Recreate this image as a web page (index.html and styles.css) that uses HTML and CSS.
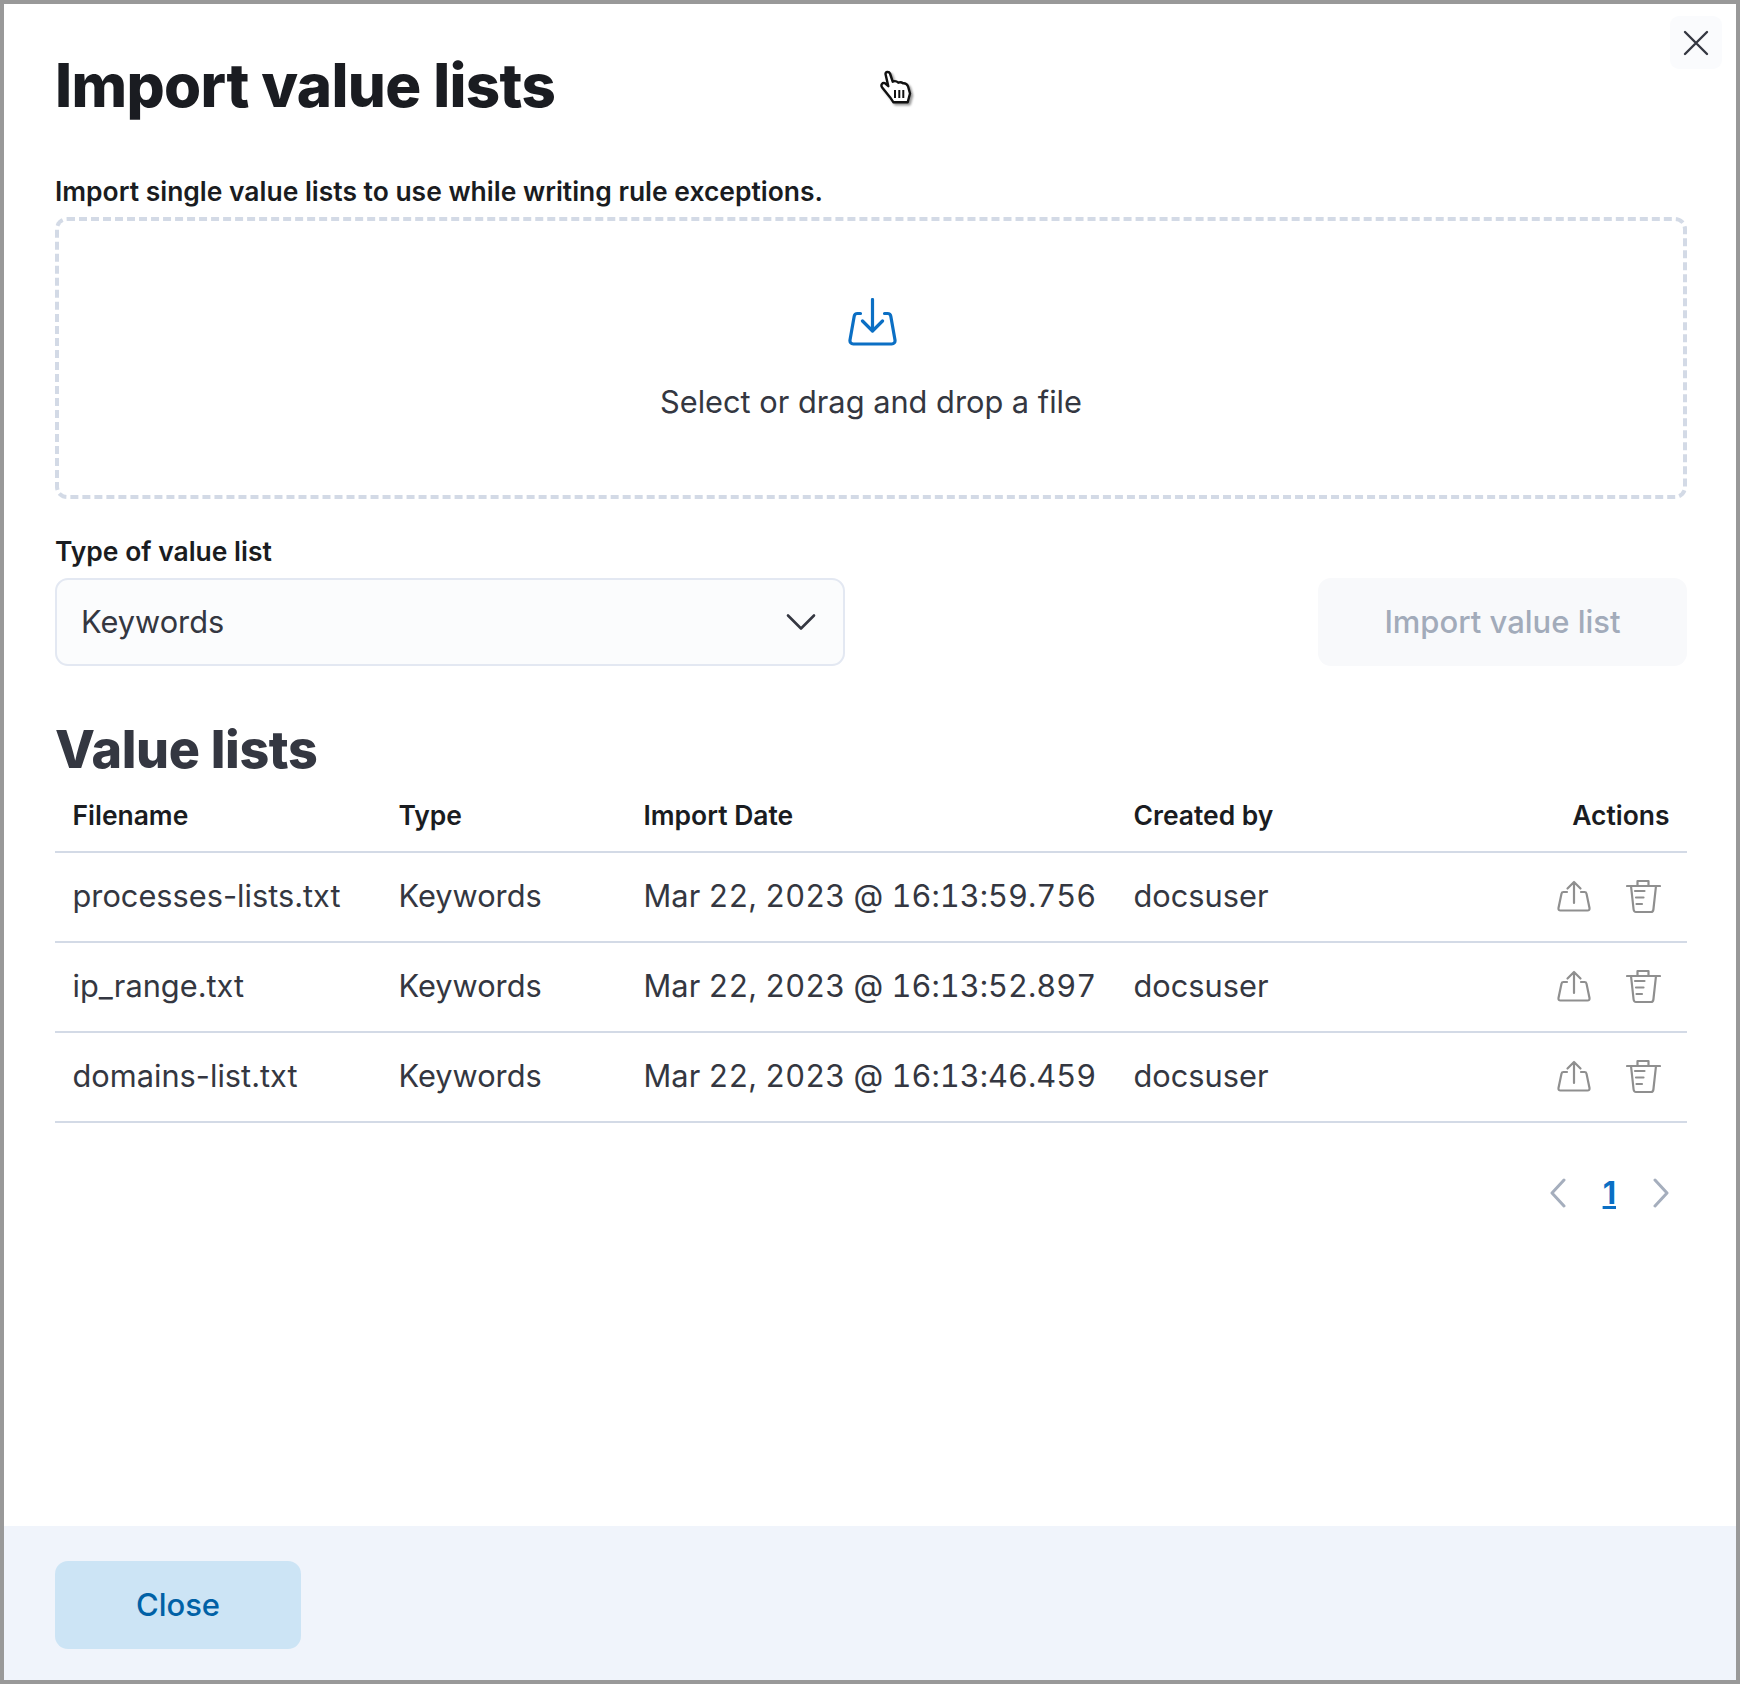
FILE: index.html
```html
<!DOCTYPE html>
<html lang="en">
<head>
<meta charset="UTF-8">
<title>Import value lists</title>
<link rel="stylesheet" href="styles.css">
</head>
<body>
<svg class="iconDefs" width="0" height="0">
    <symbol id="iconShare" viewBox="0 0 34 34">
        <path d="M17 24V3M10.500 9.500L17 3l6.500 6.500M10 13H6.500c-1 0-1.800.6-2 1.600L1.500 29c-.3 1.500.5 2.500 2 2.500h27c1.500 0 2.300-1 2-2.500l-3-14.400c-.2-1-1-1.600-2-1.600H24" fill="none" stroke="#8f8f8f" stroke-width="2.200" stroke-linecap="round" stroke-linejoin="round"/>
    </symbol>
    <symbol id="iconTrash" viewBox="0 0 35 35">
        <path d="M1 7h33M11.500 7V2h11v5M5 7l2.600 23.500c.2 1.600 1 2.500 2.400 2.500h15c1.400 0 2.200-.9 2.400-2.500L30 7M9 12h9.500M10 18.500h7.500M10.500 25h5.500" fill="none" stroke="#8f8f8f" stroke-width="2.200" stroke-linecap="round" stroke-linejoin="round"/>
    </symbol>
</svg>
<div class="modal">
    <button class="closeX" aria-label="Close">
        <svg width="26" height="26" viewBox="0 0 26 26"><path d="M2 2 L24 24 M24 2 L2 24" fill="none" stroke="#343741" stroke-width="2.400" stroke-linecap="round"/></svg>
    </button>

    <svg class="cursor" width="33" height="36" viewBox="0 0 33 36">
        <path d="M6.500 5c0-2.500 3.500-2.800 4.500-.5l2.700 8.200c1.500-.8 4-.5 5.600 1 1.500-.6 3.400-.4 4.700.6 2-.3 4 1 5 3l2 7.200-2.300 8.700H14.300l-3.300-5-8-10c-1.500-2.500 .5-5 2.800-4l3.500 3z" fill="#fff" stroke="#111" stroke-width="2.400" stroke-linejoin="round"/>
        <path d="M16 21v8M20.300 21v8M24.300 21v8" stroke="#111" stroke-width="2" fill="none"/>
    </svg>

    <div class="modalBody">
        <h1>Import value lists</h1>
        <label class="fieldLabel descLabel">Import single value lists to use while writing rule exceptions.</label>
        <div class="dropzone">
            <svg class="dropIcon" width="50" height="50" viewBox="0 0 50 50">
                <path d="M24.500 1.500V32M14.500 23l10 10 10-10M12.500 15.500H9.500c-1.700 0-3 1-3.300 2.700L2 42c-.3 2.300 1 4 3.300 4H43.700c2.300 0 3.600-1.700 3.300-4L42.800 18.200c-.3-1.700-1.600-2.700-3.300-2.700H36.500" fill="none" stroke="#0b6fc4" stroke-width="3.200" stroke-linecap="round" stroke-linejoin="round"/>
            </svg>
            <div class="dropText">Select or drag and drop a file</div>
        </div>

        <label class="fieldLabel typeLabel">Type of value list</label>
        <div class="formRow">
            <div class="selectBox">
                <span>Keywords</span>
                <svg class="selectArrow" width="30" height="18" viewBox="0 0 30 18"><path d="M2 2.500L15 15.500 28 2.500" fill="none" stroke="#343741" stroke-width="2.600" stroke-linecap="round" stroke-linejoin="round"/></svg>
            </div>
            <button class="importBtn" disabled>Import value list</button>
        </div>

        <h2>Value lists</h2>
        <table class="listTable">
            <thead>
                <tr>
                    <th class="colName">Filename</th>
                    <th class="colType">Type</th>
                    <th class="colDate">Import Date</th>
                    <th class="colUser">Created by</th>
                    <th class="colActions">Actions</th>
                </tr>
            </thead>
            <tbody>
                <tr>
                    <td>processes-lists.txt</td>
                    <td>Keywords</td>
                    <td class="dateCell">Mar 22, 2023 @ 16:13:59.756</td>
                    <td>docsuser</td>
                    <td class="colActions">
                        <div class="actionIcons">
                            <svg class="shareIcon"><use href="#iconShare"/></svg>
                            <svg class="trashIcon"><use href="#iconTrash"/></svg>
                        </div>
                    </td>
                </tr>
                <tr>
                    <td>ip_range.txt</td>
                    <td>Keywords</td>
                    <td class="dateCell">Mar 22, 2023 @ 16:13:52.897</td>
                    <td>docsuser</td>
                    <td class="colActions">
                        <div class="actionIcons">
                            <svg class="shareIcon"><use href="#iconShare"/></svg>
                            <svg class="trashIcon"><use href="#iconTrash"/></svg>
                        </div>
                    </td>
                </tr>
                <tr>
                    <td>domains-list.txt</td>
                    <td>Keywords</td>
                    <td class="dateCell">Mar 22, 2023 @ 16:13:46.459</td>
                    <td>docsuser</td>
                    <td class="colActions">
                        <div class="actionIcons">
                            <svg class="shareIcon"><use href="#iconShare"/></svg>
                            <svg class="trashIcon"><use href="#iconTrash"/></svg>
                        </div>
                    </td>
                </tr>
            </tbody>
        </table>

        <div class="pager">
            <svg width="16" height="30" viewBox="0 0 16 30"><path d="M14 2L2 15l12 13" fill="none" stroke="#a5aebd" stroke-width="3" stroke-linecap="round" stroke-linejoin="round"/></svg>
            <span class="pageNum">1</span>
            <svg width="16" height="30" viewBox="0 0 16 30"><path d="M2 2l12 13L2 28" fill="none" stroke="#a5aebd" stroke-width="3" stroke-linecap="round" stroke-linejoin="round"/></svg>
        </div>
    </div>

    <div class="modalFooter">
        <button class="closeBtn">Close</button>
    </div>
</div>
</body>
</html>
```

FILE: styles.css
```css
* {
    box-sizing: border-box;
}

body {
    margin: 0;
    font-family: Inter, sans-serif;
    color: #343741;
    background: #fff;
}

.iconDefs {
    display: block;
}

.modal {
    position: relative;
    width: 1740px;
    height: 1684px;
    border: 4px solid #999;
    display: flex;
    flex-direction: column;
    background: #fff;
}

.closeX {
    position: absolute;
    top: 12px;
    right: 14px;
    width: 52px;
    height: 53px;
    border: none;
    border-radius: 9px;
    background: #fafbfd;
    display: flex;
    align-items: center;
    justify-content: center;
    padding: 0;
}

.cursor {
    position: absolute;
    top: 65px;
    left: 875px;
    filter: drop-shadow(2px 2px 1px rgba(0, 0, 0, .4));
}

.modalBody {
    flex: 1;
    padding: 0 49px 0 51px;
}

h1 {
    margin: 0;
    padding-top: 42px;
    height: 169px;
    font-size: 60px;
    line-height: 78px;
    font-weight: 800;
    letter-spacing: -0.64px;
    color: #1a1c21;
}

.fieldLabel {
    display: block;
    font-size: 26.450px;
    line-height: 36px;
    font-weight: 600;
    color: #1a1c21;
}

.descLabel {
    height: 44px;
}

.dropzone {
    height: 282px;
    border: 4px dashed #d3dae6;
    border-radius: 12px;
    display: flex;
    flex-direction: column;
    align-items: center;
    padding-top: 77px;
}

.dropIcon {
    margin-left: 3px;
}

.dropText {
    margin-top: 32px;
    font-size: 30.750px;
    line-height: 44px;
}

.typeLabel {
    margin-top: 35px;
    height: 44px;
    line-height: 34px;
}

.formRow {
    display: flex;
    justify-content: space-between;
}

.selectBox {
    width: 790px;
    height: 88px;
    border: 2px solid #e3e8f2;
    border-radius: 13px;
    background: #fbfcfd;
    display: flex;
    align-items: center;
    justify-content: space-between;
    padding: 0 27px 2px 24px;
    font-size: 30.750px;
}

.selectArrow {
    margin-top: 2px;
}

.importBtn {
    width: 369px;
    height: 88px;
    border: none;
    border-radius: 13px;
    background: #f8f9fb;
    color: #a2abba;
    font-family: inherit;
    font-size: 31px;
    font-weight: 500;
    padding: 0 6px 2px;
}

h2 {
    margin: 50px 0 0;
    height: 70px;
    font-size: 52px;
    line-height: 67px;
    font-weight: 800;
    letter-spacing: -0.35px;
    color: #343741;
}

.listTable {
    width: 100%;
    border-collapse: collapse;
    table-layout: fixed;
}

.listTable th {
    height: 66px;
    padding: 0 17.500px 7px;
    text-align: left;
    font-size: 26.450px;
    font-weight: 600;
    color: #1a1c21;
    border-bottom: 2px solid #d3dae6;
}

.listTable td {
    height: 90px;
    padding: 0 17.500px 3px;
    font-size: 30.750px;
    white-space: nowrap;
    border-bottom: 2px solid #d3dae6;
}

.listTable .dateCell {
    font-variant-numeric: tabular-nums;
    letter-spacing: .05px;
}

.colName { width: 326px; }
.colType { width: 245px; }
.colDate { width: 490px; }
.colUser { width: 300px; }

.listTable .colActions {
    text-align: right;
}

.actionIcons {
    display: flex;
    justify-content: flex-end;
    align-items: center;
    gap: 35px;
    padding: 1px 9px 0 0;
}

.shareIcon {
    width: 34px;
    height: 34px;
}

.trashIcon {
    width: 35px;
    height: 35px;
}

.pager {
    display: flex;
    justify-content: flex-end;
    align-items: center;
    gap: 37px;
    margin-top: 51px;
    padding-right: 18px;
}

.pageNum {
    font-size: 31px;
    font-weight: 700;
    color: #0b6fc4;
    text-decoration: underline;
}

.modalFooter {
    height: 154px;
    padding: 35px 51px;
    background: #f0f4fb;
}

.closeBtn {
    width: 246px;
    height: 88px;
    border: none;
    border-radius: 13px;
    background: #cce4f5;
    color: #0061a6;
    font-family: inherit;
    font-size: 31px;
    font-weight: 500;
    padding: 0 6px 2px;
}
```
